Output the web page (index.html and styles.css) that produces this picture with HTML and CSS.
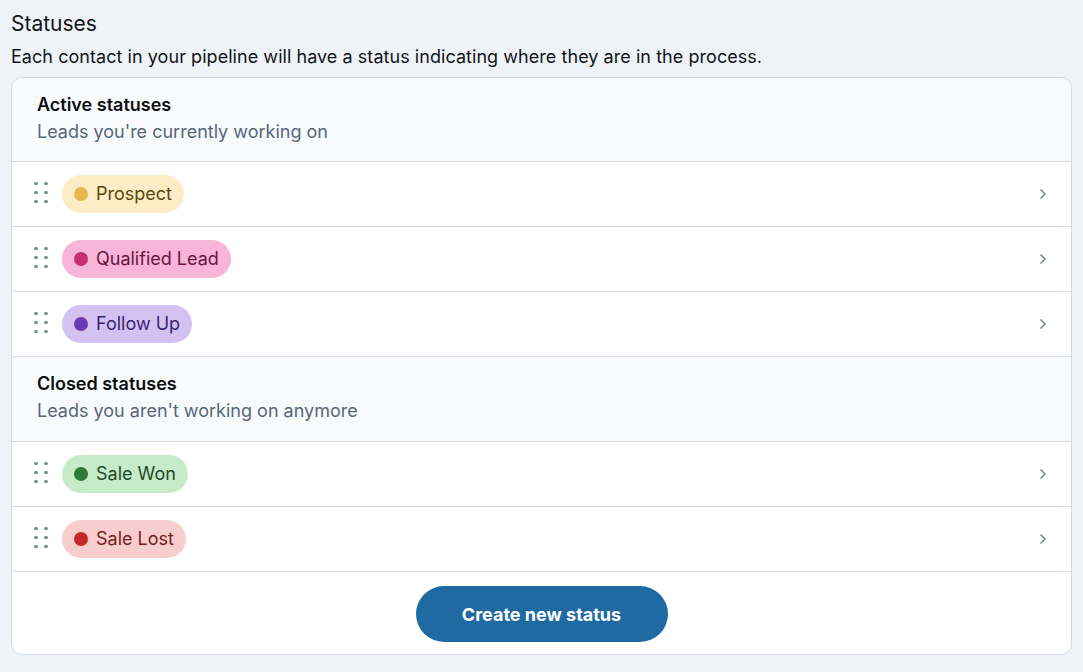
FILE: index.html
```html
<!DOCTYPE html>
<html lang="en">
<head>
<meta charset="utf-8">
<title>Statuses</title>
<link rel="stylesheet" href="styles.css">
</head>
<body>
<main class="page">
  <h1 class="title">Statuses</h1>
  <p class="intro">Each contact in your pipeline will have a status indicating where they are in the process.</p>

  <section class="card">
    <header class="group-head">
      <h2 class="group-title">Active statuses</h2>
      <p class="group-desc">Leads you're currently working on</p>
    </header>
    <ul class="list">
      <li class="row">
        <span class="handle"><i></i><i></i><i></i><i></i><i></i><i></i></span>
        <span class="pill pill-prospect"><span class="dot"></span>Prospect</span>
        <svg class="chev" viewBox="0 0 8 12"><path d="M2 2l4 4-4 4"/></svg>
      </li>
      <li class="row">
        <span class="handle"><i></i><i></i><i></i><i></i><i></i><i></i></span>
        <span class="pill pill-qualified"><span class="dot"></span>Qualified Lead</span>
        <svg class="chev" viewBox="0 0 8 12"><path d="M2 2l4 4-4 4"/></svg>
      </li>
      <li class="row">
        <span class="handle"><i></i><i></i><i></i><i></i><i></i><i></i></span>
        <span class="pill pill-follow"><span class="dot"></span>Follow Up</span>
        <svg class="chev" viewBox="0 0 8 12"><path d="M2 2l4 4-4 4"/></svg>
      </li>
    </ul>

    <header class="group-head group-head-closed">
      <h2 class="group-title">Closed statuses</h2>
      <p class="group-desc">Leads you aren't working on anymore</p>
    </header>
    <ul class="list">
      <li class="row">
        <span class="handle"><i></i><i></i><i></i><i></i><i></i><i></i></span>
        <span class="pill pill-won"><span class="dot"></span>Sale Won</span>
        <svg class="chev" viewBox="0 0 8 12"><path d="M2 2l4 4-4 4"/></svg>
      </li>
      <li class="row">
        <span class="handle"><i></i><i></i><i></i><i></i><i></i><i></i></span>
        <span class="pill pill-lost"><span class="dot"></span>Sale Lost</span>
        <svg class="chev" viewBox="0 0 8 12"><path d="M2 2l4 4-4 4"/></svg>
      </li>
    </ul>

    <footer class="card-foot">
      <button class="btn-primary" type="button">Create new status</button>
    </footer>
  </section>
</main>
</body>
</html>
```
FILE: styles.css
```css
* { box-sizing: border-box; }

html, body {
  margin: 0;
  padding: 0;
  background: #eff3f7;
  font-family: Inter, "Noto Sans", sans-serif;
  color: #111418;
}

.page {
  padding: 10px 11px 18px 11px;
}

.title {
  margin: 0;
  font-size: 21px;
  font-weight: 400;
  line-height: 28px;
}

.intro {
  margin: 6px 0 0 0;
  font-size: 18px;
  line-height: 26px;
  letter-spacing: 0.05px;
}

.card {
  margin-top: 7px;
  background: #fff;
  border: 1px solid #d3dae1;
  border-radius: 11px;
  overflow: hidden;
}

.group-head {
  background: #f8fafc;
  padding: 14px 25px 16px 25px;
  border-bottom: 1px solid #d6dce2;
}

.group-head-closed {
  padding-bottom: 17px;
}

.group-title {
  margin: 0;
  font-size: 18px;
  font-weight: 600;
  line-height: 26px;
  color: #0c0f12;
}

.group-desc {
  margin: 1px 0 0 0;
  font-size: 18px;
  line-height: 26px;
  color: #566779;
}

.list {
  list-style: none;
  margin: 0;
  padding: 0;
}

.row {
  display: flex;
  align-items: center;
  height: 65px;
  padding: 0 24px 0 22px;
  border-bottom: 1px solid #d6dce2;
}

.handle {
  display: grid;
  grid-template-columns: repeat(2, 3px);
  grid-auto-rows: 3px;
  column-gap: 7px;
  row-gap: 6px;
  width: 13px;
  margin-right: 15px;
  margin-top: -4px;
}

.handle i {
  display: block;
  width: 3.6px;
  height: 3.6px;
  border-radius: 50%;
  background: #7a8ca1;
}

.pill {
  display: inline-flex;
  align-items: center;
  height: 38px;
  padding: 0 12px 0 12px;
  border-radius: 19px;
  font-size: 18px;
  line-height: 26px;
}

.dot {
  width: 14px;
  height: 14px;
  border-radius: 50%;
  margin-right: 8px;
  flex: none;
}

.pill-prospect { background: #fcedc6; color: #5c460d; }
.pill-prospect .dot { background: #e8b84a; }

.pill-qualified { background: #f7b5d7; color: #6a1440; }
.pill-qualified .dot { background: #c52f72; }

.pill-follow { background: #d3c2f1; color: #3c1f70; }
.pill-follow .dot { background: #6a3bb4; }

.pill-won { background: #c7ebc9; color: #1f4a24; }
.pill-won .dot { background: #2e7a38; }

.pill-lost { background: #f8cdcd; color: #771b1b; }
.pill-lost .dot { background: #c42a2a; }

.chev {
  margin-left: auto;
  width: 8px;
  height: 12px;
  fill: none;
  stroke: #7c8b9c;
  stroke-width: 1.7;
  stroke-linecap: round;
  stroke-linejoin: round;
}

.card-foot {
  display: flex;
  justify-content: center;
  padding: 14px 0 12px 0;
}

.btn-primary {
  width: 252px;
  height: 56px;
  border: none;
  border-radius: 28px;
  background: #1f6aa2;
  color: #fff;
  font-family: Inter, "Noto Sans", sans-serif;
  font-size: 18px;
  font-weight: 700;
  cursor: pointer;
}
```
